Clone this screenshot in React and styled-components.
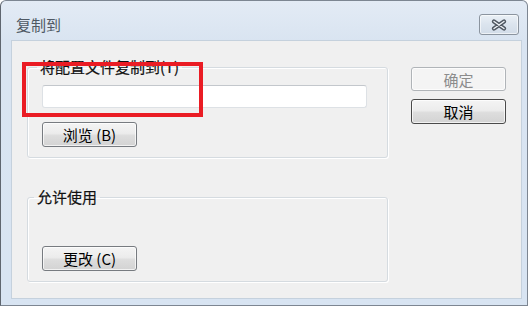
import React from 'react';
import styled, { createGlobalStyle } from 'styled-components';

const GlobalStyle = createGlobalStyle`
  html, body {
    margin: 0;
    padding: 0;
    background: #ffffff;
  }
  body {
    font-family: "Noto Sans CJK SC", "Liberation Sans", sans-serif;
    font-size: 15px;
    color: #000;
  }
`;

export default function App() {
  return (
    <>
      <GlobalStyle />
      <Page>
        <Window>
          <TitleBar>
            <Title>复制到</Title>
            <CloseButton aria-label="关闭">
              <svg width="18" height="12" viewBox="0 0 18 12">
                <path d="M4 2.5 L14 9.5 M14 2.5 L4 9.5" stroke="#4f5761" strokeWidth="4.2" strokeLinecap="round" fill="none" />
                <path d="M4 2.5 L14 9.5 M14 2.5 L4 9.5" stroke="#eef2f6" strokeWidth="1.4" strokeLinecap="round" fill="none" />
              </svg>
            </CloseButton>
          </TitleBar>
          <Frame>
            <Client>
              <LeftColumn>
                <Group>
                  <Legend>将配置文件复制到(T)</Legend>
                  <PathInput type="text" />
                  <Button>浏览 (B)</Button>
                </Group>
                <Group $spaced>
                  <Legend $shift={-8}>允许使用</Legend>
                  <Button $top={40}>更改 (C)</Button>
                </Group>
              </LeftColumn>
              <RightColumn>
                <Button disabled>确定</Button>
                <Button $focused>取消</Button>
              </RightColumn>
            </Client>
          </Frame>
        </Window>
        <Highlight />
      </Page>
    </>
  );
}

const Page = styled.div`
  position: relative;
  width: 530px;
  height: 310px;
  background: #ffffff;
`;

const Window = styled.div`
  width: 528px;
  height: 306px;
  box-sizing: border-box;
  display: flex;
  flex-direction: column;
  border: 1px solid #7d8692;
  border-left-color: #5f666f;
  border-radius: 6px 6px 0 0;
  background: linear-gradient(#e3ebf5, #d9e4f1 40px, #d8e4f2);
  overflow: hidden;
`;

const TitleBar = styled.div`
  height: 39px;
  display: flex;
  align-items: flex-start;
  justify-content: space-between;
  padding: 0 8px 0 15px;
  flex-shrink: 0;
`;

const Title = styled.div`
  margin-top: 14px;
  line-height: 20px;
  font-size: 15px;
  color: #4f5964;
`;

const CloseButton = styled.button`
  margin-top: 13px;
  width: 40px;
  height: 21px;
  box-sizing: border-box;
  padding: 0;
  display: flex;
  align-items: center;
  justify-content: center;
  border: 1px solid #8b949f;
  border-radius: 3px;
  background: linear-gradient(#eaf0f6, #dbe4ee 50%, #d2dce8);
  box-shadow: inset 0 0 0 1px rgba(255, 255, 255, 0.6);
`;

const Frame = styled.div`
  flex: 1;
  display: flex;
  padding: 0 5px 6px 10px;
`;

const Client = styled.div`
  flex: 1;
  display: flex;
  align-items: flex-start;
  padding: 17px 0 0 15px;
  background: #f0f0f0;
  border: 1px solid #c5d1dd;
`;

const LeftColumn = styled.div`
  width: 361px;
  display: flex;
  flex-direction: column;
`;

const Group = styled.fieldset`
  margin: ${(p) => (p.$spaced ? '30px' : '0')} 0 0 0;
  padding: 0 19px 10px 14px;
  min-inline-size: 0;
  display: flex;
  flex-direction: column;
  align-items: flex-start;
  border: 1px solid #d5dbe0;
  border-radius: 3px;
  box-shadow: inset 1px 1px 0 #ffffff, 1px 1px 0 #ffffff;
`;

const Legend = styled.legend`
  margin-left: ${(p) => (p.$shift ?? -5)}px;
  padding: 0 3px;
  line-height: 18px;
  font-size: 15px;
  color: #111;
  -webkit-text-stroke: 0.2px #111;
`;

const PathInput = styled.input`
  margin-top: 9px;
  width: 325px;
  height: 23px;
  box-sizing: border-box;
  border: 1px solid #dde1e5;
  border-top-color: #c3c7cc;
  border-radius: 3px;
  background: #ffffff;
  outline: none;
`;

const Button = styled.button`
  margin-top: ${(p) => (p.$top ? `${p.$top}px` : '14px')};
  width: 95px;
  height: 25px;
  box-sizing: border-box;
  padding: 0;
  font-family: "Noto Sans CJK SC", "Liberation Sans", sans-serif;
  font-size: 15px;
  line-height: 21px;
  color: #000;
  border: 1px solid ${(p) => (p.$focused ? '#4a4a4a' : '#777b80')};
  border-radius: 3px;
  background: linear-gradient(#f4f4f4, #ececec 45%, #dddddd 55%, #d3d3d3);
  box-shadow: inset 0 0 0 1px rgba(255, 255, 255, 0.7);

  &:disabled {
    border-color: #b0b4b8;
    background: #f4f4f4;
    color: #8c8c8c;
  }
`;

const RightColumn = styled.div`
  margin: 9px 0 0 23px;
  display: flex;
  flex-direction: column;

  & > ${Button} {
    margin-top: 0;
    height: 24px;
  }

  & > ${Button} + ${Button} {
    margin-top: 8px;
    height: 25px;
  }
`;

const Highlight = styled.div`
  position: absolute;
  left: 22px;
  top: 62px;
  width: 181px;
  height: 55px;
  box-sizing: border-box;
  border: 4px solid #ea1c24;
  pointer-events: none;
`;
